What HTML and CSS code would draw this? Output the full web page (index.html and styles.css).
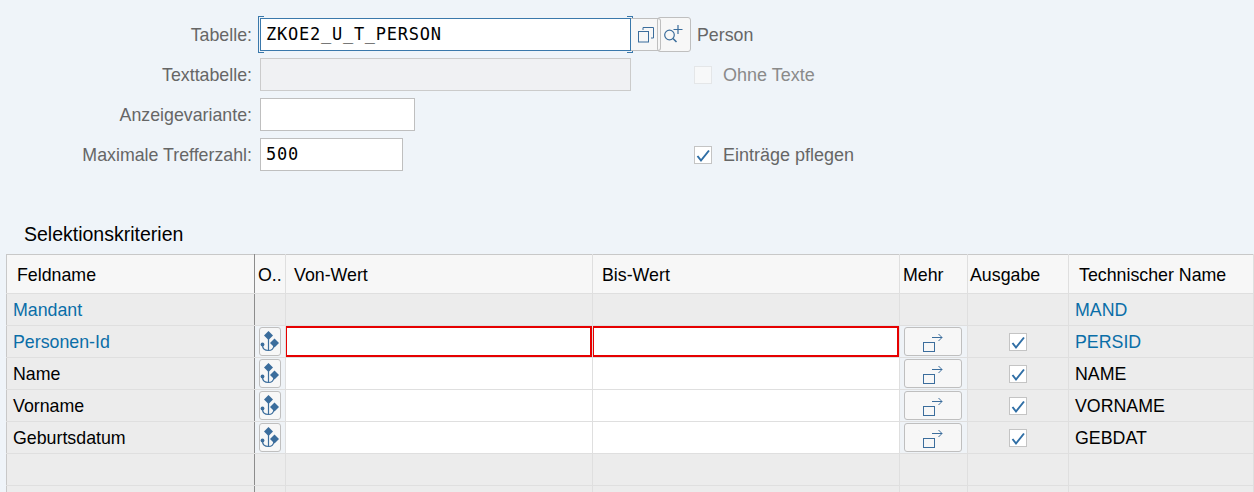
FILE: index.html
```html
<!DOCTYPE html>
<html lang="de">
  <head>
    <meta charset="UTF-8" />
    <meta name="viewport" content="width=device-width, initial-scale=1.0" />
    <title>Selektionskriterien</title>
    <link rel="stylesheet" href="styles.css">
  </head>
  <body>
    <svg class="sprites" width="0" height="0">
      <symbol id="icon-select" viewBox="0 0 20 24">
        <path d="M8.5 1l4.500 4.500-4.500 4.500-4.500-4.500z" fill="#3b6d9c" />
        <path d="M14.5 8.500l4.500 4.500-4.500 4.500-4.500-4.500z" fill="#3b6d9c" />
        <path d="M8.5 8v12.500M2.500 15c0 3.500 2.500 5.500 6 5.500s5-2 5.500-5" fill="none" stroke="#3b6d9c" stroke-width="1.200" />
        <circle cx="2.500" cy="14.500" r="1.900" fill="#3b6d9c" />
      </symbol>
      <symbol id="icon-more" viewBox="0 0 20 21">
        <rect x="0.500" y="11.500" width="11" height="9" fill="none" stroke="#3b6d9c" />
        <path d="M9 6.500h10M15.500 3l3.500 3.500-3.500 3.500" fill="none" stroke="#3b6d9c" />
      </symbol>
      <symbol id="icon-check" viewBox="0 0 18 18">
        <path d="M3.500 10L7 14.500 15 4.500" fill="none" stroke="#2f6ea5" stroke-width="2" />
      </symbol>
    </svg>

    <div class="page">
      <div class="form">
        <label class="form-label">Tabelle:</label>
        <div class="field-group">
          <div class="input input-focus input-wide mono">ZKOE2_U_T_PERSON</div>
          <button class="value-btn value-btn-copy">
            <svg width="16" height="16" viewBox="0 0 16 16">
              <rect x="0.500" y="4.500" width="10" height="10.500" fill="none" stroke="#3b6d9c" />
              <path d="M5 3V0.500h10.500V11H13" fill="none" stroke="#3b6d9c" />
            </svg>
          </button>
          <button class="value-btn value-btn-search">
            <svg width="21" height="21" viewBox="0 0 21 21">
              <circle cx="5.500" cy="11" r="4.800" fill="none" stroke="#3b6d9c" stroke-width="1.200" />
              <path d="M9 14.500l3.500 3.500" stroke="#3b6d9c" stroke-width="1.600" />
              <path d="M14 1v9M9.500 5.500h9" stroke="#3b6d9c" stroke-width="1.200" />
            </svg>
          </button>
        </div>
        <div class="side-text">Person</div>

        <label class="form-label">Texttabelle:</label>
        <div class="field-group"><div class="input input-wide input-disabled"></div></div>
        <div class="check-row check-row-disabled">
          <span class="checkbox checkbox-disabled"></span>
          <span class="check-text">Ohne Texte</span>
        </div>

        <label class="form-label">Anzeigevariante:</label>
        <div class="field-group"><div class="input input-variant"></div></div>
        <div></div>

        <label class="form-label">Maximale Trefferzahl:</label>
        <div class="field-group"><div class="input input-hits mono">500</div></div>
        <div class="check-row">
          <span class="checkbox"><svg width="18" height="18"><use href="#icon-check" /></svg></span>
          <span class="check-text">Einträge pflegen</span>
        </div>
      </div>

      <h3 class="section-title">Selektionskriterien</h3>

      <table class="criteria">
        <colgroup>
          <col class="col-name" />
          <col class="col-op" />
          <col class="col-value" />
          <col class="col-value" />
          <col class="col-more" />
          <col class="col-output" />
          <col />
        </colgroup>
        <thead>
          <tr>
            <th class="cell-name head-name">Feldname</th>
            <th class="head-op">O..</th>
            <th class="head-from">Von-Wert</th>
            <th class="head-to">Bis-Wert</th>
            <th class="head-more">Mehr</th>
            <th class="head-output">Ausgabe</th>
            <th>Technischer Name</th>
          </tr>
        </thead>
        <tbody>
          <tr class="key-row">
            <td class="cell-name">Mandant</td>
            <td></td>
            <td></td>
            <td></td>
            <td></td>
            <td></td>
            <td>MAND</td>
          </tr>
          <tr class="key-row">
            <td class="cell-name">Personen-Id</td>
            <td class="cell-btn"><button class="op-btn"><svg width="20" height="24"><use href="#icon-select" /></svg></button></td>
            <td class="cell-input"><div class="input-error"></div></td>
            <td class="cell-input"><div class="input-error"></div></td>
            <td class="cell-btn"><button class="more-btn"><svg width="20" height="21"><use href="#icon-more" /></svg></button></td>
            <td class="cell-check"><span class="checkbox"><svg width="18" height="18"><use href="#icon-check" /></svg></span></td>
            <td>PERSID</td>
          </tr>
          <tr>
            <td class="cell-name">Name</td>
            <td class="cell-btn"><button class="op-btn"><svg width="20" height="24"><use href="#icon-select" /></svg></button></td>
            <td class="cell-input"></td>
            <td class="cell-input"></td>
            <td class="cell-btn"><button class="more-btn"><svg width="20" height="21"><use href="#icon-more" /></svg></button></td>
            <td class="cell-check"><span class="checkbox"><svg width="18" height="18"><use href="#icon-check" /></svg></span></td>
            <td>NAME</td>
          </tr>
          <tr>
            <td class="cell-name">Vorname</td>
            <td class="cell-btn"><button class="op-btn"><svg width="20" height="24"><use href="#icon-select" /></svg></button></td>
            <td class="cell-input"></td>
            <td class="cell-input"></td>
            <td class="cell-btn"><button class="more-btn"><svg width="20" height="21"><use href="#icon-more" /></svg></button></td>
            <td class="cell-check"><span class="checkbox"><svg width="18" height="18"><use href="#icon-check" /></svg></span></td>
            <td>VORNAME</td>
          </tr>
          <tr>
            <td class="cell-name">Geburtsdatum</td>
            <td class="cell-btn"><button class="op-btn"><svg width="20" height="24"><use href="#icon-select" /></svg></button></td>
            <td class="cell-input"></td>
            <td class="cell-input"></td>
            <td class="cell-btn"><button class="more-btn"><svg width="20" height="21"><use href="#icon-more" /></svg></button></td>
            <td class="cell-check"><span class="checkbox"><svg width="18" height="18"><use href="#icon-check" /></svg></span></td>
            <td>GEBDAT</td>
          </tr>
          <tr>
            <td class="cell-name"></td><td></td><td></td><td></td><td></td><td></td><td></td>
          </tr>
          <tr>
            <td class="cell-name"></td><td></td><td></td><td></td><td></td><td></td><td></td>
          </tr>
        </tbody>
      </table>
    </div>
  </body>
</html>
```

FILE: styles.css
```css
html, body {
  margin: 0;
  height: 100%;
}
body {
  font-family: "Liberation Sans", Arial, sans-serif;
  font-size: 17.8px;
  background: #eff4f9;
  color: #000;
}
.sprites {
  display: block;
  height: 0;
}
.page {
  height: 100vh;
  overflow: hidden;
  box-sizing: border-box;
  padding-top: 18px;
}

/* top form */
.form {
  display: grid;
  grid-template-columns: 260px 434px 1fr;
  grid-auto-rows: 33px;
  row-gap: 7px;
  align-items: center;
}
.form-label {
  text-align: right;
  padding: 2px 8px 0 0;
  color: #666;
}
.field-group {
  display: flex;
  height: 33px;
}
.input {
  box-sizing: border-box;
  height: 33px;
  background: #fff;
  border: 1px solid #bfbfbf;
  line-height: 31px;
  padding-left: 5px;
}
.mono {
  font-family: "DejaVu Sans Mono", monospace;
  font-size: 17px;
  letter-spacing: 0.75px;
}
.input-wide {
  width: 371px;
}
.input-variant {
  width: 155px;
}
.input-hits {
  width: 143px;
}
.input-disabled {
  background: #f0f1f3;
  border-color: #cbcbcb;
}
.input-focus {
  position: relative;
  border-color: #3a78ab;
}
.input-focus::before,
.input-focus::after {
  content: "";
  position: absolute;
  top: -3px;
  bottom: -3px;
  width: 5px;
  border: 1px solid #3a78ab;
}
.input-focus::before {
  left: -3px;
  border-right: none;
}
.input-focus::after {
  right: -3px;
  border-left: none;
}
.value-btn {
  box-sizing: border-box;
  padding: 0;
  border: 1px solid #bfbfbf;
  display: flex;
  align-items: center;
  justify-content: center;
}
/* the search button slides under the copy button, both edges stay visible */
.value-btn-copy {
  position: relative;
  z-index: 1;
  width: 30px;
  height: 33px;
  border-left: none;
  border-radius: 0 3px 3px 0;
  background: linear-gradient(to right, #f7f7f7 26px, transparent 26px);
}
.value-btn-search {
  width: 34px;
  height: 35px;
  margin: -1px 0 0 -4px;
  background: #f7f7f7;
  border-radius: 3px;
}
.side-text {
  padding: 2px 0 0 3px;
  color: #666;
}
.check-row {
  display: flex;
  align-items: center;
  gap: 11px;
  color: #666;
}
.check-text {
  padding-top: 2px;
  font-size: 18px;
}
.check-row-disabled {
  color: #8a8a8a;
}
.checkbox {
  box-sizing: border-box;
  width: 18px;
  height: 18px;
  display: inline-block;
  background: #fff;
  border: 1px solid #c4c4c4;
}
.checkbox svg {
  display: block;
  margin: -1px;
}
.checkbox-disabled {
  background: #f7f8f9;
  border-color: #e4e6e8;
}

/* selection table */
.section-title {
  margin: 53px 0 11px 24px;
  font-size: 19.5px;
  font-weight: normal;
  line-height: 20px;
  height: 19px;
}
.criteria {
  margin-left: 6px;
  width: 1248px;
  table-layout: fixed;
  border-collapse: collapse;
  border-top: 1px solid #c8c8c8;
  border-left: 1px solid #c8c8c8;
}
.col-name {
  width: 248px;
}
.col-op {
  width: 31px;
}
.col-value {
  width: 307px;
}
.col-more {
  width: 68px;
}
.col-output {
  width: 101px;
}
.criteria th,
.criteria td {
  padding: 2px 0 0 7px;
  border: 1px solid #dfdfdf;
  border-top: none;
  border-left: none;
  height: 29px;
  box-sizing: content-box;
}
.criteria th {
  height: 36px;
  font-weight: normal;
  text-align: left;
  background: #f7f7f7;
}
.criteria td {
  background: #ececec;
}
.criteria .head-name {
  padding-left: 10px;
}
.criteria .head-op {
  padding-left: 3px;
}
.criteria .head-from {
  padding-left: 8px;
}
.criteria .head-to {
  padding-left: 9px;
}
.criteria .head-more {
  padding-left: 3px;
}
.criteria .head-output {
  padding-left: 2px;
}
.criteria th:last-child {
  padding-left: 10px;
}
.criteria td:last-child {
  padding-left: 6px;
}
.criteria .cell-name {
  border-right: 1px solid #8c8c8c;
}
.criteria td.cell-name {
  padding-left: 6px;
}
.key-row td {
  color: #0a6ea8;
}
.criteria .cell-input {
  padding: 0;
  background: #fff;
}
.input-error {
  box-sizing: border-box;
  height: 31px;
  border: 2px solid #e60000;
  background: #fff;
  margin-left: -1px;
}
.criteria .cell-btn {
  padding: 0;
  background: #eff3f7;
  text-align: center;
}
.op-btn,
.more-btn {
  box-sizing: border-box;
  height: 29px;
  padding: 0;
  background: #f7f7f7;
  border: 1px solid #bfbfbf;
  border-radius: 3px;
  display: block;
}
.op-btn {
  width: 22px;
  margin: 0 auto;
}
.more-btn {
  width: 58px;
  margin: 0 0 0 4px;
}
.op-btn svg,
.more-btn svg {
  display: block;
  margin: 0 auto;
}
.criteria .cell-check {
  padding: 0;
  text-align: center;
}
.cell-check .checkbox {
  vertical-align: middle;
}
```
